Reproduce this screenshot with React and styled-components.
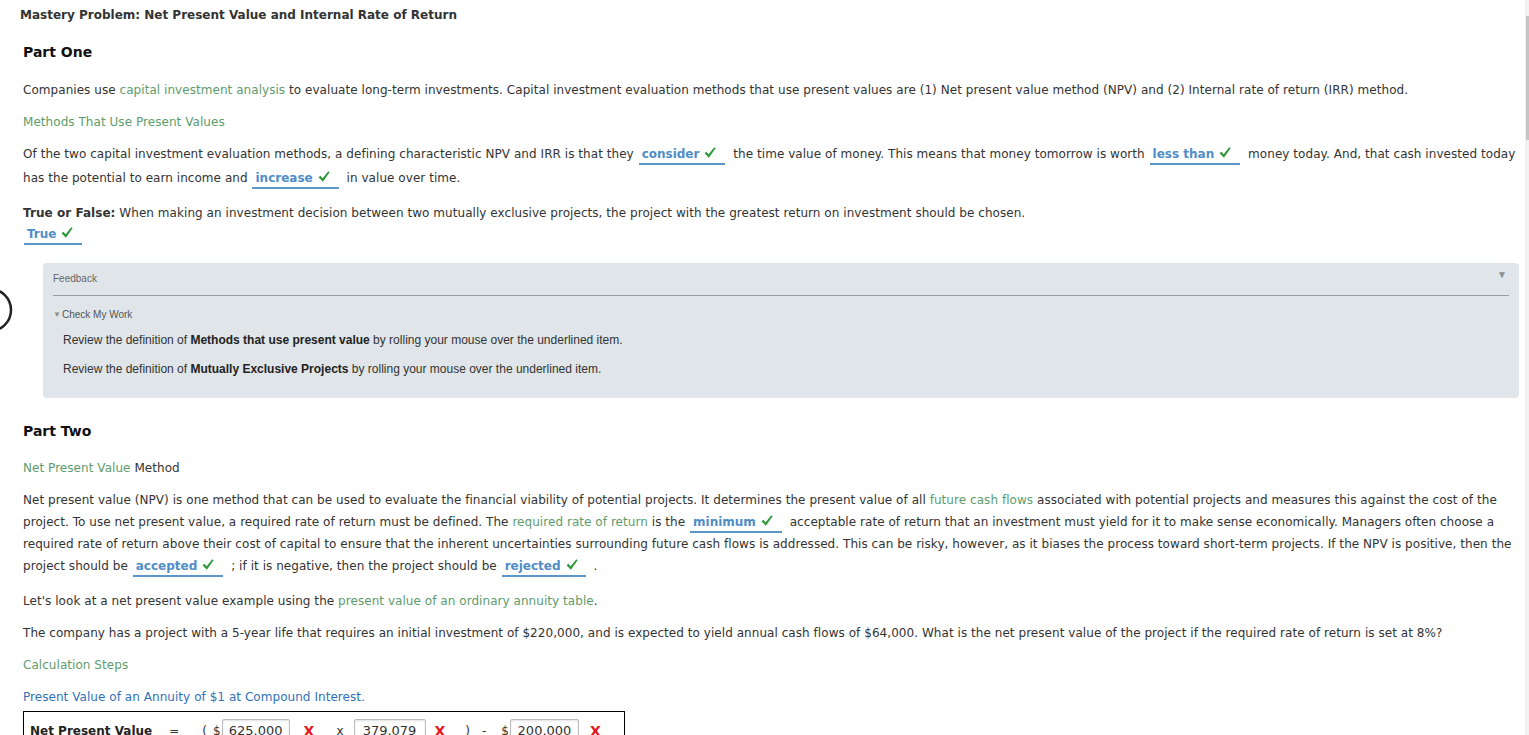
import styled, { createGlobalStyle } from "styled-components";

const GlobalStyle = createGlobalStyle`
  html, body {
    margin: 0;
    padding: 0;
    overflow: hidden;
    background: #fff;
  }
  body {
    font-family: "DejaVu Sans", Verdana, sans-serif;
    font-size: 12px;
    color: #333;
  }
`;

const Shell = styled.div`
  display: flex;
  height: 100vh;
  width: 100vw;
`;

const Page = styled.main`
  position: relative;
  flex: 1;
  min-width: 0;
  overflow: hidden;
  padding: 0 6px 0 23px;
`;

const Track = styled.div`
  width: 4px;
  background: #f1f1f1;
  display: flex;
  flex-direction: column;
  padding-top: 16px;
`;

const Thumb = styled.div`
  height: 124px;
  margin-left: 1px;
  background: #c4c4c4;
`;

const EdgeCircle = styled.svg`
  position: absolute;
  left: 0;
  top: 286px;
`;

const Title = styled.div`
  font-weight: bold;
  line-height: 20px;
  padding-top: 5px;
  margin-left: -3px;
  color: #333;
`;

const Heading = styled.h2`
  font-size: 14px;
  font-weight: bold;
  color: #111;
  line-height: 20px;
  margin: ${(p) => p.$mt}px 0 0;
`;

const Para = styled.p`
  margin: ${(p) => p.$mt ?? 10}px 0 0;
  line-height: ${(p) => p.$lh ?? 22}px;
  letter-spacing: 0.05px;
  color: ${(p) => (p.$green ? "#5e9c6c" : p.$blue ? "#2f72bb" : "#333")};
`;

const Link = styled.span`
  color: #5e9c6c;
`;

const Answer = styled.span`
  display: inline-block;
  line-height: 16px;
  margin: 0 ${(p) => p.$mr ?? 4}px 0 1px;
  padding: 0 ${(p) => p.$pr ?? 9}px 1px 3px;
  border-bottom: 2px solid #5b96cb;
  font-weight: bold;
  color: #4f8dc8;
  letter-spacing: 0;
`;

const CheckMark = styled.svg`
  margin-left: 5px;
  vertical-align: -1px;
`;

const AnswerRow = styled.div`
  line-height: 16px;
  margin-top: 2px;
`;

const Feedback = styled.section`
  margin: 18px 0 0 20px;
  background: #dfe5e8;
  border-radius: 4px;
  padding: 10px 10px 21px;
  font-family: "Liberation Sans", Arial, sans-serif;
`;

const FeedbackHead = styled.div`
  display: flex;
  justify-content: space-between;
  align-items: center;
  font-size: 10px;
  color: #666;
  padding-bottom: 11px;
  border-bottom: 1px solid #979c9f;
`;

const Caret = styled.span`
  color: #8a8f92;
  font-size: ${(p) => p.$size}px;
  margin-right: ${(p) => p.$mr ?? 0}px;
  margin-top: ${(p) => p.$mt ?? 0}px;
`;

const Toggle = styled.div`
  margin-top: 13px;
  font-size: 10px;
  color: #555;
  display: flex;
  align-items: center;
`;

const Review = styled.div`
  margin: ${(p) => p.$mt}px 0 0 10px;
  font-size: 12px;
  line-height: 16px;
  color: #333;

  b {
    color: #222;
  }
`;

const CalcTable = styled.div`
  margin-top: 3px;
  width: 600px;
  border: 1px solid #000;
  padding: 7px 0 6px;
  display: flex;
  align-items: center;
`;

const Label = styled.span`
  font-weight: bold;
  color: #222;
  margin-left: 6px;
`;

const Sym = styled.span`
  margin-left: ${(p) => p.$ml}px;
  color: #333;
`;

const Cross = styled.span`
  margin-left: ${(p) => p.$ml}px;
  color: #e8141b;
  font-weight: bold;
  font-size: 14px;
`;

const Field = styled.span`
  margin-left: ${(p) => p.$ml}px;
  width: ${(p) => p.$w}px;
  height: 23px;
  box-sizing: border-box;
  border: 1px solid #bdbdbd;
  border-radius: 2px;
  box-shadow: inset 0 1px 2px rgba(0, 0, 0, 0.12);
  display: flex;
  align-items: center;
  justify-content: center;
  font-size: 13px;
  color: #333;
`;

const Check = () => (
  <CheckMark width="12" height="13" viewBox="0 0 13 13">
    <path d="M0.6 7.4 L2.6 5.7 L5 8.3 L11.1 0.8 L12.6 1.9 L5.3 12.3 Z" fill="#2f9a3c" />
  </CheckMark>
);

const Dd = ({ children, pr, mr }) => (
  <Answer $pr={pr} $mr={mr}>
    {children}
    <Check />
  </Answer>
);

export default function App() {
  return (
    <>
      <GlobalStyle />
      <Shell>
        <Page>
          <EdgeCircle width="14" height="50" viewBox="0 0 14 50">
            <circle cx="-10" cy="24" r="21" fill="none" stroke="#222" strokeWidth="2.5" />
          </EdgeCircle>

          <Title>Mastery Problem: Net Present Value and Internal Rate of Return</Title>

          <Heading $mt={17}>Part One</Heading>

          <Para $mt={17}>
            Companies use <Link>capital investment analysis</Link> to evaluate long-term investments.
            Capital investment evaluation methods that use present values are (1) Net present value
            method (NPV) and (2) Internal rate of return (IRR) method.
          </Para>

          <Para $green>Methods That Use Present Values</Para>

          <Para $mt={9} $lh={24}>
            Of the two capital investment evaluation methods, a defining characteristic NPV and IRR is
            that they <Dd>consider</Dd> the time value of money. This means that money tomorrow is
            worth <Dd>less than</Dd> money today. And, that cash invested today has the potential to
            earn income and <Dd>increase</Dd> in value over time.
          </Para>

          <Para $mt={12}>
            <b>True or False:</b> When making an investment decision between two mutually exclusive
            projects, the project with the greatest return on investment should be chosen.
          </Para>
          <AnswerRow>
            <Dd pr={9}>True</Dd>
          </AnswerRow>

          <Feedback>
            <FeedbackHead>
              <span>Feedback</span>
              <Caret $size={10} $mr={2} $mt={-8}>▼</Caret>
            </FeedbackHead>
            <Toggle>
              <Caret $size={8} $mr={1}>▼</Caret>
              Check My Work
            </Toggle>
            <Review $mt={12}>
              Review the definition of <b>Methods that use present value</b> by rolling your mouse
              over the underlined item.
            </Review>
            <Review $mt={13}>
              Review the definition of <b>Mutually Exclusive Projects</b> by rolling your mouse over
              the underlined item.
            </Review>
          </Feedback>

          <Heading $mt={23}>Part Two</Heading>

          <Para $mt={16}>
            <Link>Net Present Value</Link> Method
          </Para>

          <Para>
            Net present value (NPV) is one method that can be used to evaluate the financial
            viability of potential projects. It determines the present value of all{" "}
            <Link>future cash flows</Link> associated with potential projects and measures this
            against the cost of the project. To use net present value, a required rate of return
            must be defined. The <Link>required rate of return</Link> is the <Dd>minimum</Dd>{" "}
            acceptable rate of return that an investment must yield for it to make sense
            economically. Managers often choose a required rate of return above their cost of
            capital to ensure that the inherent uncertainties surrounding future cash flows is
            addressed. This can be risky, however, as it biases the process toward short-term
            projects. If the NPV is positive, then the project should be <Dd>accepted</Dd> ; if it
            is negative, then the project should be <Dd pr={8}>rejected</Dd> .
          </Para>

          <Para $mt={13}>
            Let's look at a net present value example using the{" "}
            <Link>present value of an ordinary annuity table</Link>.
          </Para>

          <Para>
            The company has a project with a 5-year life that requires an initial investment of
            $220,000, and is expected to yield annual cash flows of $64,000. What is the net present
            value of the project if the required rate of return is set at 8%?
          </Para>

          <Para $green>Calculation Steps</Para>

          <Para $blue>Present Value of an Annuity of $1 at Compound Interest.</Para>

          <CalcTable>
            <Label>Net Present Value</Label>
            <Sym $ml={17}>=</Sym>
            <Sym $ml={23}>(</Sym>
            <Sym $ml={6}>$</Sym>
            <Field $ml={1} $w={68}>625.000</Field>
            <Cross $ml={14}>X</Cross>
            <Sym $ml={22}>x</Sym>
            <Field $ml={10} $w={72}>379.079</Field>
            <Cross $ml={9}>X</Cross>
            <Sym $ml={20}>)</Sym>
            <Sym $ml={12}>-</Sym>
            <Sym $ml={15}>$</Sym>
            <Field $ml={1} $w={69}>200.000</Field>
            <Cross $ml={11}>X</Cross>
          </CalcTable>
        </Page>
        <Track>
          <Thumb />
        </Track>
      </Shell>
    </>
  );
}
